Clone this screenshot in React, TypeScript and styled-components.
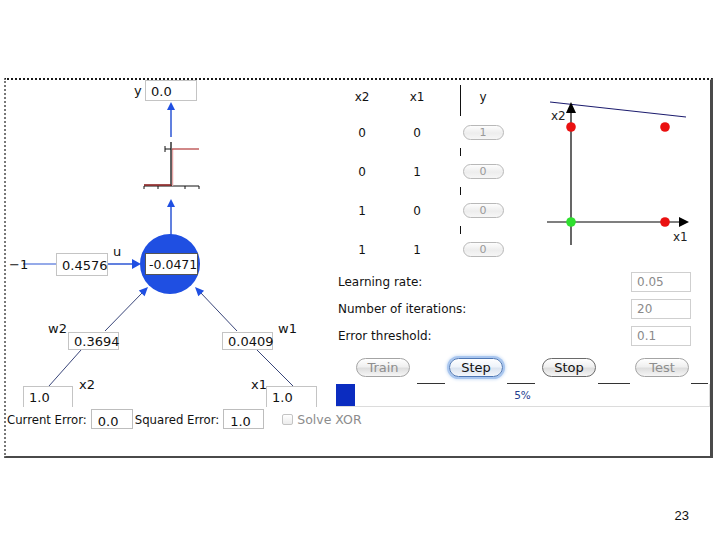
import React from 'react';
import styled, { createGlobalStyle, css } from 'styled-components';

const GlobalStyle = createGlobalStyle`
  html, body { margin: 0; padding: 0; background: #fff; }
  body { font-family: "DejaVu Sans", "Liberation Sans", sans-serif; color: #111; }
`;

const Slide = styled.div`
  width: 720px;
  height: 540px;
  box-sizing: border-box;
  padding: 78px 0 0 4px;
  overflow: hidden;
  display: flex;
  flex-direction: column;
`;

const Frame = styled.div`
  width: 709px;
  height: 380px;
  box-sizing: border-box;
  border-top: 2px dotted #1a1a1a;
  border-left: 2px dotted #777;
  border-right: 3px solid #4a4a4a;
  border-bottom: 2px solid #4a4a4a;
  display: grid;
  grid-template-columns: 324px 1fr;
  background: #fff;
`;

const Footer = styled.div`
  margin-top: 50px;
  padding-right: 31px;
  text-align: right;
  font-family: "Liberation Sans", Arial, sans-serif;
  font-size: 13px;
`;

/* ---------- left: the neuron diagram ---------- */

const LeftPane = styled.div`
  display: flex;
  flex-direction: column;
  min-width: 0;
`;

const Canvas = styled.div`
  position: relative;
  height: 327px;
`;

const Wires = styled.svg`
  position: absolute;
  left: 0;
  top: 0;
`;

type At = { $x: number; $y: number };

const Tag = styled.div<At>`
  position: absolute;
  left: ${p => p.$x - 6}px;
  top: ${p => p.$y - 80}px;
  font-size: 13px;
  line-height: 15px;
  white-space: nowrap;
`;

const NodeField = styled.div<At & { $w: number; $h: number; $open?: boolean; $dark?: boolean }>`
  position: absolute;
  left: ${p => p.$x - 6}px;
  top: ${p => p.$y - 80}px;
  width: ${p => p.$w}px;
  height: ${p => p.$h}px;
  box-sizing: border-box;
  border: 1px solid ${p => (p.$dark ? '#555' : '#c4c4c4')};
  ${p => p.$open && css`border-bottom: none;`}
  background: #fff;
  padding-left: ${p => (p.$dark ? 3 : 5)}px;
  font-size: ${p => (p.$dark ? 12.5 : 13)}px;
  line-height: ${p => p.$h}px;
  white-space: nowrap;
`;

const StatusRow = styled.div`
  display: flex;
  align-items: center;
  height: 20px;
  margin-top: 2px;
  padding-left: 1px;
  font-family: "DejaVu Sans Condensed", "DejaVu Sans", sans-serif;
  font-size: 13px;
  white-space: nowrap;
  & > * { flex: none; }
`;

const StatusField = styled.div<{ $w: number }>`
  width: ${p => p.$w}px;
  height: 20px;
  box-sizing: border-box;
  border: 1px solid #bdbdbd;
  padding: 3px 0 0 6px;
  margin: 0 2px 0 4px;
  font-family: "DejaVu Sans", sans-serif;
  font-size: 13px;
  line-height: 17px;
`;

const Check = styled.span`
  width: 11px;
  height: 11px;
  box-sizing: border-box;
  margin: 0 4px 0 16px;
  border: 1px solid #c4c4c4;
  border-radius: 2px;
  background: linear-gradient(#fff, #ececec);
`;

const Muted = styled.span`
  color: #8c8c8c;
  font-family: "DejaVu Sans", sans-serif;
  font-size: 12.5px;
`;

/* ---------- right: truth table, plot, controls ---------- */

const RightPane = styled.div`
  padding-left: 6px;
  display: flex;
  flex-direction: column;
`;

const TopArea = styled.div`
  display: flex;
  height: 189px;
`;

const Truth = styled.div`
  display: grid;
  grid-template-columns: 52px 58px 14px 46px;
  grid-template-rows: 33px repeat(4, 39px);
  width: 170px;
  font-size: 12px;
`;

const Cell = styled.div<{ $rule?: 'head' | 'tick' }>`
  position: relative;
  display: flex;
  align-items: center;
  justify-content: center;
  ${p =>
    p.$rule === 'head' &&
    css`
      &::before {
        content: '';
        position: absolute;
        left: 0;
        top: 5px;
        height: 31px;
        border-left: 1px solid #111;
      }
    `}
  ${p =>
    p.$rule === 'tick' &&
    css`
      &::before {
        content: '';
        position: absolute;
        left: 0;
        top: -4px;
        height: 8px;
        border-left: 1px solid #111;
      }
    `}
`;

const Pill = styled.div`
  width: 41px;
  height: 15px;
  box-sizing: border-box;
  border: 1px solid #b8b8b8;
  border-radius: 8px;
  background: linear-gradient(#fdfdfd, #ededed 55%, #f6f6f6);
  color: #9a9a9a;
  font-size: 11px;
  line-height: 13px;
  text-align: center;
`;

const Plot = styled.svg`
  margin-left: 34px;
`;

const ParamList = styled.div`
  display: flex;
  flex-direction: column;
  gap: 7px;
  margin-top: 3px;
`;

const ParamRow = styled.div`
  display: flex;
  align-items: center;
  justify-content: space-between;
  width: 355px;
  height: 20px;
  padding-left: 2px;
  box-sizing: border-box;
  font-size: 12px;
`;

const ParamField = styled.div`
  width: 60px;
  height: 20px;
  box-sizing: border-box;
  border: 1px solid #cfcfcf;
  padding-left: 5px;
  color: #8a8a8a;
  font-size: 12px;
  line-height: 19px;
`;

const ButtonRow = styled.div`
  display: flex;
  gap: 39px;
  padding-left: 20px;
  margin-top: 12px;
  height: 19px;
`;

const Button = styled.div<{ $state: 'off' | 'on' | 'focus' }>`
  width: 54px;
  height: 19px;
  box-sizing: border-box;
  border-radius: 10px;
  border: 1px solid #a4a4a4;
  background: linear-gradient(#ffffff, #f0f0f0 45%, #dedede 55%, #f6f6f6);
  font-size: 13px;
  line-height: 17px;
  text-align: center;
  color: ${p => (p.$state === 'off' ? '#8e8e8e' : '#111')};
  ${p => p.$state === 'on' && css`border-color: #6a6a6a;`}
  ${p =>
    p.$state === 'focus' &&
    css`
      border-color: #4e77b4;
      box-shadow: 0 0 0 2px #a9c6ef, 0 0 3px 3px #d3e3f7;
      background: linear-gradient(#ffffff, #eef3fa 45%, #dbe4f0 55%, #f3f6fb);
    `}
`;

const Rail = styled.div`
  display: flex;
  height: 1px;
  margin-top: 6px;
`;

const RailSeg = styled.span<{ $gap: number; $w: number }>`
  margin-left: ${p => p.$gap}px;
  width: ${p => p.$w}px;
  background: #333;
`;

const Progress = styled.div`
  display: grid;
  width: 374px;
  height: 23px;
  box-sizing: border-box;
  border-right: 1px solid #dcdcdc;
  border-bottom: 1px solid #dcdcdc;
`;

const ProgressFill = styled.div`
  grid-area: 1 / 1;
  width: 19px;
  background: #0b2cc0;
`;

const ProgressText = styled.div`
  grid-area: 1 / 1;
  justify-self: center;
  align-self: center;
  font-size: 10.5px;
  color: #233c8e;
`;

const rows = [
  ['0', '0', '1'],
  ['0', '1', '0'],
  ['1', '0', '0'],
  ['1', '1', '0'],
];

const BLUE = '#1f4fe2';
const LINE = '#2c56d4';
const NAVY = '#22306a';

function Diagram() {
  return (
    <Canvas>
      <Wires width={324} height={327} viewBox="6 80 324 327">
        {/* output arrow */}
        <line x1={171} y1={137} x2={171} y2={108} stroke={LINE} strokeWidth={1.5} />
        <polygon points="171,102 167,110 175,110" fill={BLUE} />
        {/* step function */}
        <line x1={144} y1={186} x2={199} y2={186} stroke="#111" />
        {[144, 158, 185, 199].map(x => (
          <line key={x} x1={x} y1={186} x2={x} y2={189} stroke="#111" />
        ))}
        <line x1={172.5} y1={149} x2={172.5} y2={186} stroke="#e8a6a6" strokeWidth={1.5} />
        <line x1={171} y1={142} x2={171} y2={186} stroke="#111" strokeWidth={1.3} />
        <line x1={165} y1={149} x2={171} y2={149} stroke="#111" />
        <line x1={165} y1={146} x2={165} y2={152} stroke="#111" />
        <line x1={172} y1={149} x2={199} y2={149} stroke="#b33a3a" strokeWidth={1.2} />
        <line x1={144} y1={185} x2={171} y2={185} stroke="#8b2020" strokeWidth={1.6} />
        {/* arrow from neuron to step */}
        <line x1={171} y1={236} x2={171} y2={205} stroke={LINE} strokeWidth={1.5} />
        <polygon points="171,199 167,207 175,207" fill={BLUE} />
        {/* neuron */}
        <circle cx={170} cy={264} r={30} fill={BLUE} />
        {/* bias */}
        <line x1={23} y1={264} x2={56} y2={264} stroke={LINE} strokeWidth={1.2} />
        <line x1={108} y1={264} x2={134} y2={264} stroke={LINE} strokeWidth={1.5} />
        <polygon points="141,264 132,259 132,269" fill={BLUE} />
        {/* weights */}
        <line x1={105} y1={331} x2={143} y2={292} stroke={NAVY} strokeWidth={0.9} />
        <polygon points="148,287 144.6,296.2 138.8,290.6" fill={BLUE} />
        <line x1={237} y1={331} x2={200} y2={292} stroke={NAVY} strokeWidth={0.9} />
        <polygon points="195,287 204.1,290.7 198.3,296.3" fill={BLUE} />
        <line x1={81} y1={350} x2={49} y2={386} stroke={NAVY} strokeWidth={0.9} />
        <line x1={257} y1={350} x2={293} y2={386} stroke={NAVY} strokeWidth={0.9} />
      </Wires>

      <Tag $x={134} $y={83}>y</Tag>
      <NodeField $x={145} $y={80} $w={52} $h={21}>0.0</NodeField>

      <Tag $x={9} $y={257}>−1</Tag>
      <NodeField $x={56} $y={253} $w={52} $h={23}>0.4576</NodeField>
      <Tag $x={113} $y={244}>u</Tag>
      <NodeField $x={145} $y={253} $w={53} $h={22} $dark>-0.0471</NodeField>

      <Tag $x={48} $y={321}>w2</Tag>
      <NodeField $x={68} $y={332} $w={51} $h={18}>0.3694</NodeField>
      <Tag $x={278} $y={321}>w1</Tag>
      <NodeField $x={222} $y={332} $w={51} $h={18}>0.0409</NodeField>

      <NodeField $x={23} $y={386} $w={50} $h={21} $open>1.0</NodeField>
      <Tag $x={79} $y={377}>x2</Tag>
      <Tag $x={251} $y={377}>x1</Tag>
      <NodeField $x={266} $y={386} $w={51} $h={21} $open>1.0</NodeField>
    </Canvas>
  );
}

function Separation() {
  return (
    <Plot width={170} height={189} viewBox="540 80 170 189">
      <line x1={550} y1={102} x2={686} y2={117} stroke="#1c1c6e" strokeWidth={1.2} />
      <line x1={571} y1={110} x2={571} y2={245} stroke="#000" strokeWidth={1.2} />
      <polygon points="571,102 566,113 576,113" fill="#000" />
      <line x1={547} y1={222} x2={681} y2={222} stroke="#000" strokeWidth={1.2} />
      <polygon points="689,222 679,217 679,227" fill="#000" />
      <circle cx={571} cy={127} r={4.8} fill="#ea1010" />
      <circle cx={665} cy={127} r={4.8} fill="#ea1010" />
      <circle cx={665} cy={222} r={4.8} fill="#ea1010" />
      <circle cx={571} cy={222} r={4.8} fill="#2fe02f" />
      <text x={551} y={120} fontSize={12} fontFamily="DejaVu Sans, sans-serif" fill="#222">x2</text>
      <text x={673} y={241} fontSize={12} fontFamily="DejaVu Sans, sans-serif" fill="#222">x1</text>
    </Plot>
  );
}

export default function App() {
  return (
    <>
      <GlobalStyle />
      <Slide>
        <Frame>
          <LeftPane>
            <Diagram />
            <StatusRow>
              <span>Current Error:</span>
              <StatusField $w={42}>0.0</StatusField>
              <span>Squared Error:</span>
              <StatusField $w={41}>1.0</StatusField>
              <Check />
              <Muted>Solve XOR</Muted>
            </StatusRow>
          </LeftPane>

          <RightPane>
            <TopArea>
              <Truth>
                <Cell>x2</Cell>
                <Cell>x1</Cell>
                <Cell />
                <Cell $rule="head">y</Cell>
                {rows.map(([a, b, y], i) => (
                  <React.Fragment key={i}>
                    <Cell>{a}</Cell>
                    <Cell>{b}</Cell>
                    <Cell />
                    <Cell $rule={i > 0 ? 'tick' : undefined}>
                      <Pill>{y}</Pill>
                    </Cell>
                  </React.Fragment>
                ))}
              </Truth>
              <Separation />
            </TopArea>

            <ParamList>
              <ParamRow>
                Learning rate:
                <ParamField>0.05</ParamField>
              </ParamRow>
              <ParamRow>
                Number of iterations:
                <ParamField>20</ParamField>
              </ParamRow>
              <ParamRow>
                Error threshold:
                <ParamField>0.1</ParamField>
              </ParamRow>
            </ParamList>

            <ButtonRow>
              <Button $state="off">Train</Button>
              <Button $state="focus">Step</Button>
              <Button $state="on">Stop</Button>
              <Button $state="off">Test</Button>
            </ButtonRow>

            <Rail>
              <RailSeg $gap={81} $w={28} />
              <RailSeg $gap={62} $w={28} />
              <RailSeg $gap={63} $w={32} />
              <RailSeg $gap={61} $w={17} />
            </Rail>

            <Progress>
              <ProgressFill />
              <ProgressText>5%</ProgressText>
            </Progress>
          </RightPane>
        </Frame>
        <Footer>23</Footer>
      </Slide>
    </>
  );
}
